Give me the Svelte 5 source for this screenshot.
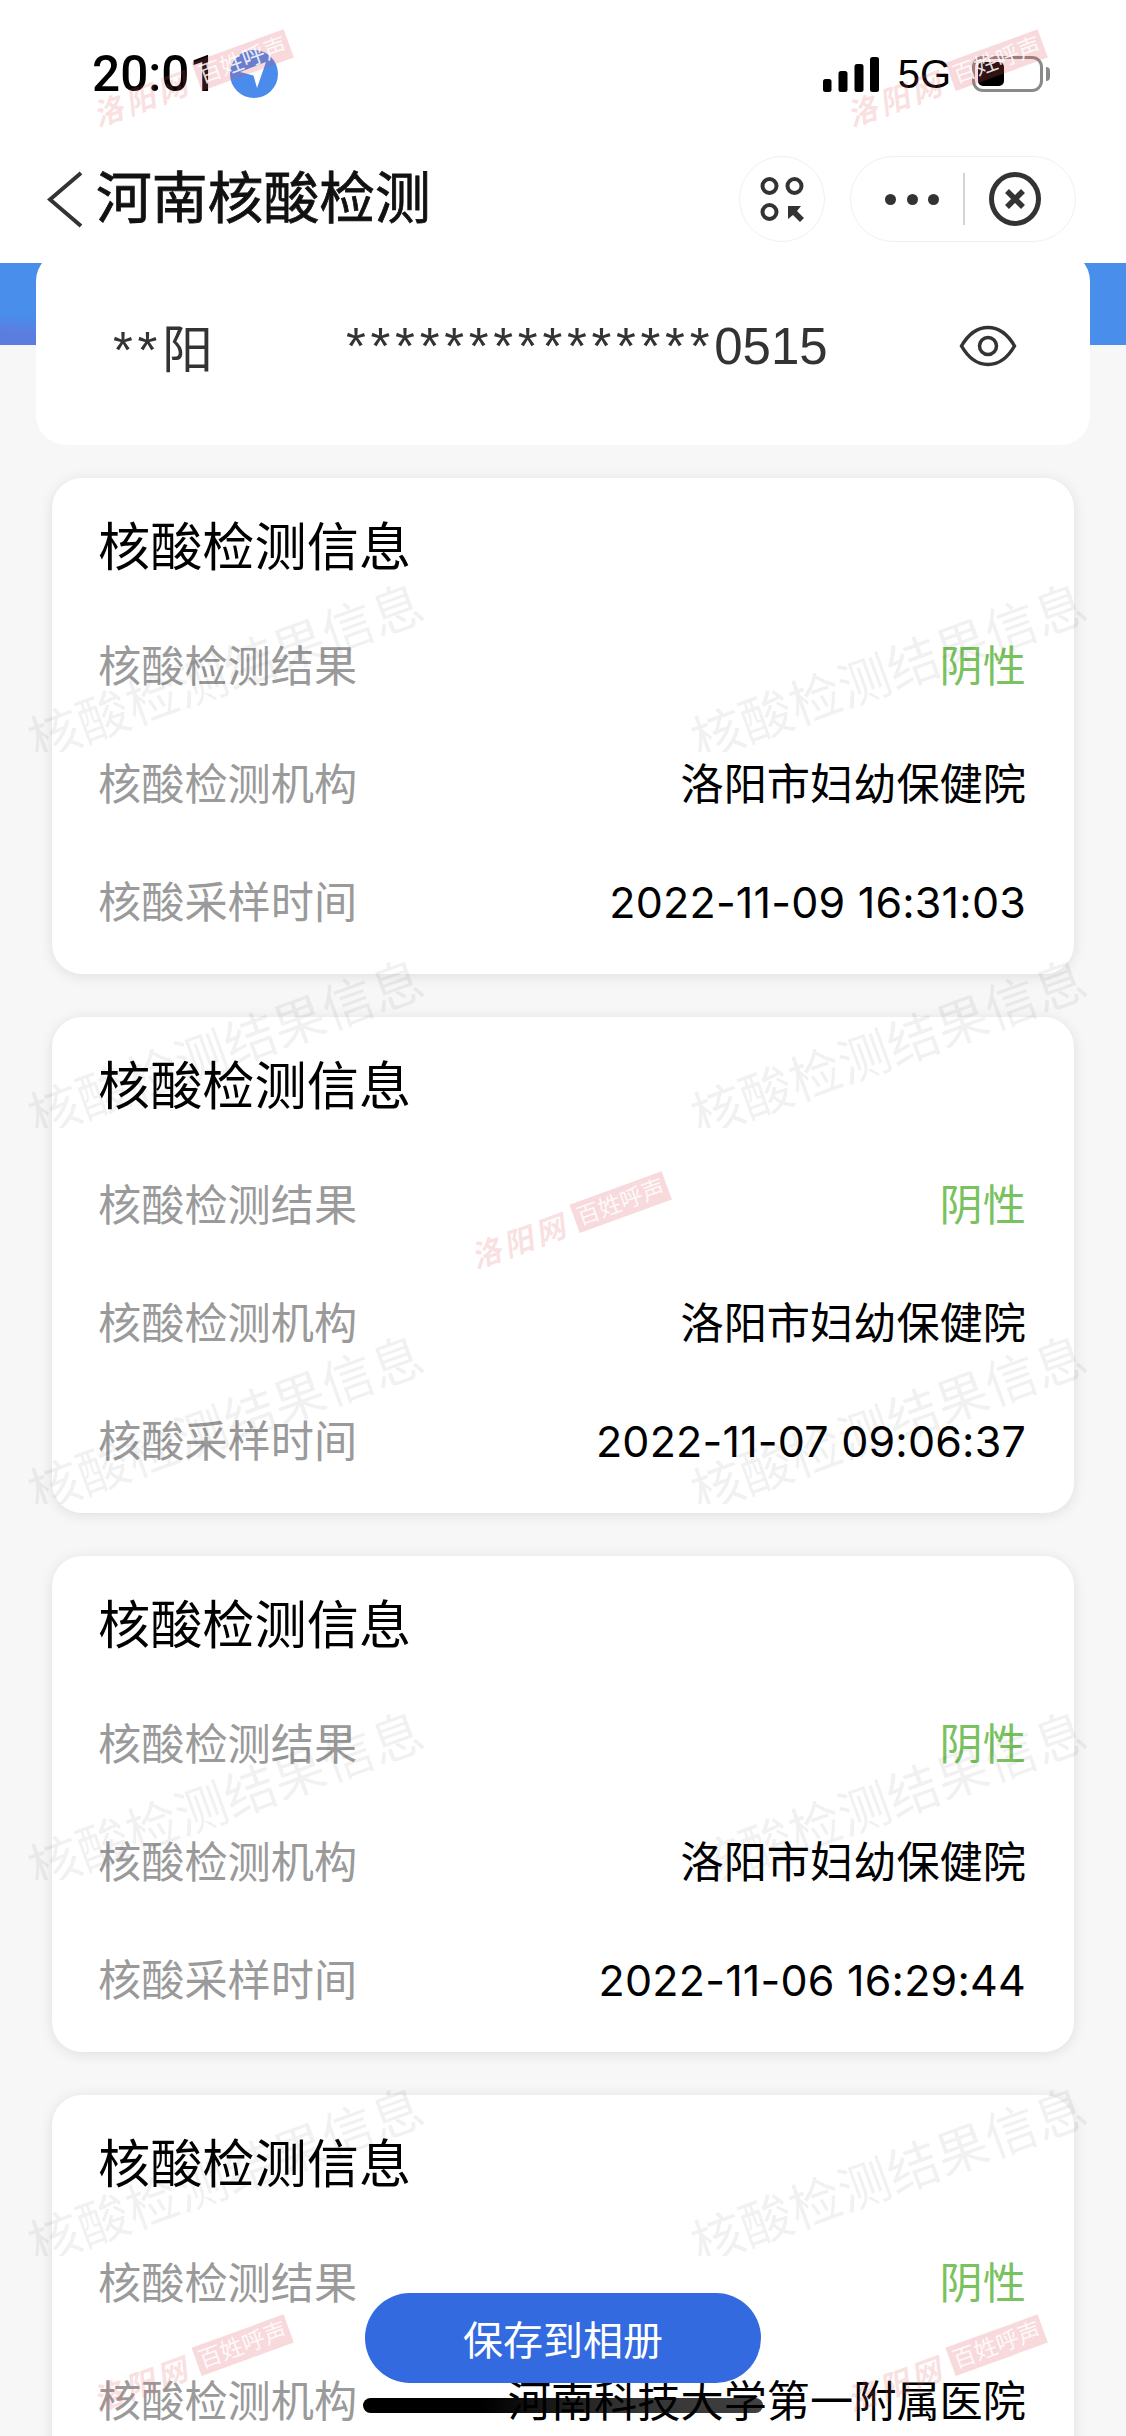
<script>
  const records = [
    { result: '阴性', org: '洛阳市妇幼保健院', time: '2022-11-09 16:31:03' },
    { result: '阴性', org: '洛阳市妇幼保健院', time: '2022-11-07 09:06:37' },
    { result: '阴性', org: '洛阳市妇幼保健院', time: '2022-11-06 16:29:44' },
    { result: '阴性', org: '河南科技大学第一附属医院', time: '' }
  ];

  // watermark tiles, 2 columns x 5 rows
  const tiles = Array.from({ length: 10 });

  // red stamps of the news site, free placed over the shot
  const stamps = [
    { x: 191, y: 79 },
    { x: 945, y: 79 },
    { x: 569, y: 1221 },
    { x: 191, y: 2364 },
    { x: 945, y: 2364 }
  ];
</script>

<div class="page">
  <header>
    <div class="status">
      <div class="clock">
        <span class="time">20:01</span>
        <svg class="loc" width="48" height="48" viewBox="0 0 48 48">
          <circle cx="24" cy="24" r="24" fill="#4a8bec" />
          <path d="M10 22 L36 12 L27 38 L23.5 25.5 Z" fill="#fff" />
        </svg>
      </div>
      <div class="indicators">
        <svg width="56" height="35" viewBox="0 0 56 35">
          <rect x="0" y="22" width="8.5" height="13" rx="2.5" />
          <rect x="15.5" y="14" width="9" height="21" rx="2.5" />
          <rect x="31.5" y="7" width="9" height="28" rx="2.5" />
          <rect x="47" y="0" width="9" height="35" rx="2.5" />
        </svg>
        <span class="net">5G</span>
        <div class="battery"><div class="level"></div></div>
      </div>
    </div>

    <nav>
      <svg class="back" width="36" height="57" viewBox="0 0 36 57">
        <path d="M34 2 L3 28.5 L34 55" fill="none" stroke="#333" stroke-width="4" />
      </svg>
      <h1>河南核酸检测</h1>
      <button class="round" aria-label="scan">
        <svg width="50" height="50" viewBox="0 0 50 50" fill="none" stroke="#333" stroke-width="4">
          <circle cx="12.5" cy="12" r="7" />
          <circle cx="37.5" cy="12" r="7" />
          <circle cx="12.5" cy="38" r="7" />
          <path d="M31 32 H44 L40 37 L47 44 L43 48 L36 41 L31 45 Z" fill="#333" stroke="none" />
        </svg>
      </button>
      <div class="capsule">
        <div class="dots"><i></i><i></i><i></i></div>
        <span class="divider"></span>
        <svg width="52" height="54" viewBox="0 0 52 54" fill="none" stroke="#333">
          <ellipse cx="26" cy="27" rx="23.5" ry="24.5" stroke-width="5" />
          <path d="M18 19 L34 35 M34 19 L18 35" stroke-width="5.5" />
        </svg>
      </div>
    </nav>
  </header>

  <main>
    <div class="hero"></div>

    <section class="id-card">
      <span class="name"><span class="stars">**</span>阳</span>
      <span class="id-no"><span class="stars">***************</span>0515</span>
      <svg class="eye" width="58" height="42" viewBox="0 0 58 42" fill="none" stroke="#333" stroke-width="3.5">
        <path d="M2.5 21 C10 8 19 2.5 29 2.5 C39 2.5 48 8 55.5 21 C48 34 39 39.5 29 39.5 C19 39.5 10 34 2.5 21 Z" />
        <circle cx="29" cy="21" r="8.5" />
      </svg>
    </section>

    <div class="records">
      {#each records as r}
        <section class="card">
          <h2>核酸检测信息</h2>
          <div class="row">
            <span class="label">核酸检测结果</span>
            <span class="negative">{r.result}</span>
          </div>
          <div class="row">
            <span class="label">核酸检测机构</span>
            <span>{r.org}</span>
          </div>
          {#if r.time}
            <div class="row">
              <span class="label">核酸采样时间</span>
              <span class="stamp-time">{r.time}</span>
            </div>
          {/if}
        </section>
      {/each}
    </div>
  </main>

  <div class="marks">
    {#each tiles as _}
      <div class="tile"><span>核酸检测结果信息</span></div>
    {/each}
  </div>

  {#each stamps as s}
    <div class="stamp" style="left: {s.x}px; top: {s.y}px">
      <span class="site">洛阳网</span>
      <span class="slogan">百姓呼声</span>
    </div>
  {/each}

  <button class="save">保存到相册</button>
  <div class="home-bar"></div>
</div>

<style>
  :global(body) {
    margin: 0;
  }

  .page {
    position: relative;
    width: 1126px;
    height: 2436px;
    overflow: hidden;
    background: #f7f7f7;
    color: #000;
    font-family: "Liberation Sans", "Noto Sans CJK SC", sans-serif;
  }

  header {
    position: relative;
    z-index: 2;
    height: 263px;
    background: #fff;
  }

  .status {
    display: flex;
    justify-content: space-between;
    align-items: center;
    height: 48px;
    padding: 50px 83px 47px 92px;
  }

  .clock {
    display: flex;
    align-items: center;
    gap: 12px;
  }

  .time {
    font-family: Roboto, "Liberation Sans", sans-serif;
    font-size: 49.5px;
    font-weight: 500;
    line-height: 48px;
  }

  .indicators {
    display: flex;
    align-items: center;
  }

  .net {
    margin: 0 21px 0 19px;
    font-size: 40px;
    line-height: 48px;
  }

  .battery {
    position: relative;
    box-sizing: border-box;
    width: 71px;
    height: 36px;
    padding: 3px;
    border: 3px solid #8a8a8a;
    border-radius: 11px;
  }

  .battery::after {
    content: '';
    position: absolute;
    top: 8px;
    right: -10px;
    width: 4px;
    height: 14px;
    border-radius: 0 4px 4px 0;
    background: #8a8a8a;
  }

  .level {
    width: 26px;
    height: 100%;
    border-radius: 5px;
    background: #000;
  }

  nav {
    display: flex;
    align-items: center;
    height: 86px;
    padding: 11px 50px 21px 47px;
  }

  .back {
    flex: none;
  }

  h1 {
    flex: 1;
    margin: 0 0 0 13px;
    font-size: 55.8px;
    font-weight: 400;
    line-height: 60px;
    color: #111;
    -webkit-text-stroke: 0.8px #111;
  }

  button {
    padding: 0;
    font-family: inherit;
  }

  .round,
  .capsule {
    box-sizing: border-box;
    height: 86px;
    border: 1px solid #f0f0f0;
    background: #fff;
  }

  .round {
    display: flex;
    align-items: center;
    justify-content: center;
    width: 86px;
    border-radius: 50%;
  }

  .capsule {
    display: flex;
    align-items: center;
    width: 226px;
    margin-left: 25px;
    padding-left: 34px;
    border-radius: 43px;
  }

  .dots {
    display: flex;
    gap: 10.5px;
  }

  .dots i {
    width: 11px;
    height: 11px;
    border-radius: 50%;
    background: #333;
  }

  .divider {
    width: 1.5px;
    height: 52px;
    margin: 0 24px;
    background: #d4d4d4;
  }

  main {
    position: relative;
    display: flow-root;
    padding: 0 36px;
  }

  .hero {
    position: absolute;
    top: 0;
    left: 0;
    right: 0;
    height: 82px;
    background: linear-gradient(186deg, #488eea 84%, #5c7de0 93%);
  }

  .id-card {
    position: relative;
    box-sizing: border-box;
    display: flex;
    align-items: center;
    height: 194px;
    margin-top: -12px;
    padding: 0 73px 4px 77px;
    border-radius: 30px;
    background: #fff;
    color: #333;
    font-size: 51px;
  }

  .stars {
    letter-spacing: 4.7px;
  }

  .name {
    width: 233px;
  }

  .id-no {
    flex: 1;
  }

  .records {
    display: flex;
    flex-direction: column;
    gap: 43px;
    padding: 33px 16px 0;
  }

  .card {
    position: relative;
    flex: none;
    box-sizing: border-box;
    height: 496px;
    padding: 40px 48px 13px 46px;
    border-radius: 30px;
    background: #fff;
    box-shadow: 0 2px 14px rgba(0, 0, 0, 0.1);
  }

  h2 {
    margin: 0 0 26px;
    font-size: 52.2px;
    font-weight: 400;
    line-height: 60px;
  }

  .row {
    display: flex;
    justify-content: space-between;
    align-items: center;
    height: 118px;
    font-size: 43.2px;
  }

  .label {
    color: #9a9a9a;
  }

  .negative {
    color: #79c25f;
  }

  .stamp-time {
    padding-top: 6px;
    font-family: Inter, "Liberation Sans", sans-serif;
    font-size: 43px;
    letter-spacing: 0.2px;
  }

  .marks {
    position: absolute;
    top: 376px;
    left: 0;
    z-index: 3;
    display: grid;
    grid-template-columns: repeat(2, 663px);
    grid-auto-rows: 376px;
    pointer-events: none;
  }

  .tile {
    position: relative;
    overflow: hidden;
  }

  .tile span {
    position: absolute;
    left: 226px;
    top: 297px;
    font-size: 52px;
    line-height: 1;
    white-space: nowrap;
    color: rgba(0, 0, 0, 0.055);
    transform: translate(-50%, -50%) rotate(-20deg);
  }

  .stamp {
    position: absolute;
    z-index: 4;
    display: flex;
    align-items: center;
    gap: 8px;
    white-space: nowrap;
    pointer-events: none;
    transform: translate(-50%, -50%) rotate(-20deg);
  }

  .site {
    font-size: 30px;
    font-style: italic;
    font-weight: 700;
    letter-spacing: 4px;
    color: rgba(226, 90, 100, 0.2);
  }

  .slogan {
    padding: 2px 3px;
    font-size: 23px;
    line-height: 26px;
    color: rgba(255, 255, 255, 0.85);
    background: rgba(222, 80, 95, 0.22);
  }

  .save {
    position: absolute;
    left: 365px;
    top: 2293px;
    z-index: 5;
    width: 396px;
    height: 90px;
    border: none;
    border-radius: 45px;
    background: #346ae0;
    color: #fff;
    font-size: 40px;
  }

  .home-bar {
    position: absolute;
    left: 363px;
    top: 2398px;
    z-index: 5;
    width: 400px;
    height: 15px;
    border-radius: 8px;
    background: linear-gradient(90deg, #000 30%, rgba(0, 0, 0, 0.8) 65%, rgba(0, 0, 0, 0.75));
  }
</style>
